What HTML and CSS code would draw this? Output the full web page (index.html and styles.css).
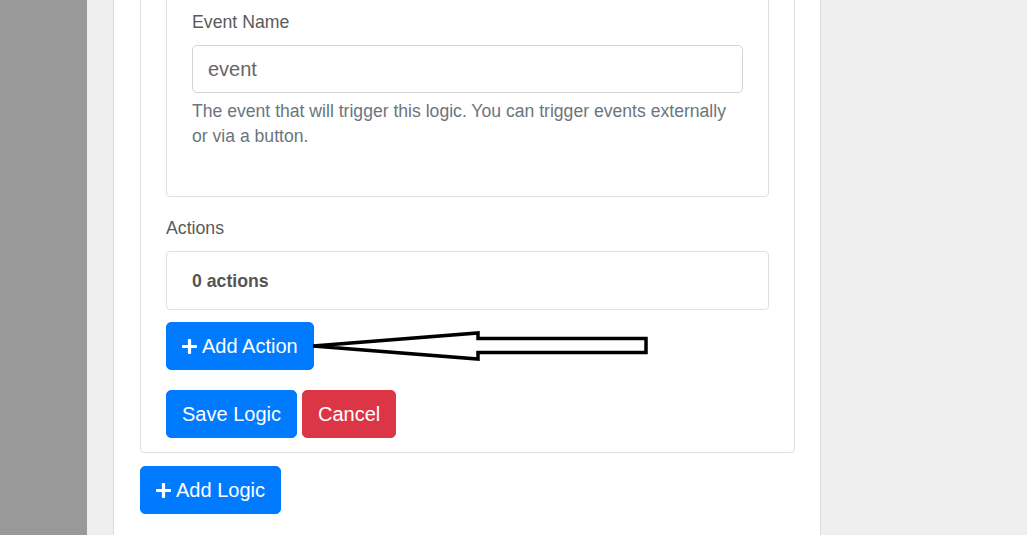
FILE: index.html
```html
<!DOCTYPE html>
<html lang="en">
<head>
<meta charset="utf-8">
<title>Logic editor</title>
<link rel="stylesheet" href="styles.css">
</head>
<body>
<div class="layout">
  <div class="sidebar"></div>
  <div class="gutter"></div>
  <main class="panel">
    <section class="card logic-card">
      <div class="card inner-card">
        <div class="form-group">
          <label class="label" for="event-name">Event Name</label>
          <input id="event-name" class="form-control" type="text" value="event">
          <p class="form-text">The event that will trigger this logic. You can trigger events externally or via a button.</p>
        </div>
      </div>
      <div class="label actions-label">Actions</div>
      <div class="card actions-box"><strong>0 actions</strong></div>
      <button class="btn btn-primary add-action" type="button">
        <svg class="plus" viewBox="0 32 448 448" aria-hidden="true"><path d="M416 208H272V64c0-17.67-14.33-32-32-32h-32c-17.67 0-32 14.33-32 32v144H32c-17.67 0-32 14.33-32 32v32c0 17.67 14.33 32 32 32h144v144c0 17.670 14.33 32 32 32h32c17.67 0 32-14.33 32-32V304h144c17.67 0 32-14.33 32-32v-32c0-17.67-14.33-32-32-32z"/></svg>
        Add Action
      </button>
      <div class="btn-row">
        <button class="btn btn-primary" type="button">Save Logic</button>
        <button class="btn btn-danger" type="button">Cancel</button>
      </div>
    </section>
    <button class="btn btn-primary add-logic" type="button">
      <svg class="plus" viewBox="0 32 448 448" aria-hidden="true"><path d="M416 208H272V64c0-17.67-14.33-32-32-32h-32c-17.67 0-32 14.33-32 32v144H32c-17.67 0-32 14.33-32 32v32c0 17.67 14.33 32 32 32h144v144c0 17.67 14.33 32 32 32h32c17.67 0 32-14.33 32-32V304h144c17.67 0 32-14.33 32-32v-32c0-17.67-14.33-32-32-32z"/></svg>
      Add Logic
    </button>
  </main>
  <div class="rest"></div>
</div>
<svg class="arrow" viewBox="0 0 1027 535" aria-hidden="true">
  <polygon points="313,346 478,333 478,338.5 646,338.5 646,352.5 478,352.5 478,359" />
</svg>
</body>
</html>
```

FILE: styles.css
```css
html, body {
  margin: 0;
  height: 100%;
  overflow: hidden;
}

body {
  font-family: "Liberation Sans", Arial, Helvetica, sans-serif;
  font-size: 16px;
  line-height: 1.5;
  color: #555;
  background: #efefef;
  position: relative;
}

.layout {
  display: flex;
  height: 535px;
}

.sidebar {
  width: 87px;
  flex: none;
  background: #999999;
}

.gutter {
  width: 26px;
  flex: none;
  background: #efefef;
}

.panel {
  flex: none;
  width: 708px;
  box-sizing: border-box;
  background: #fff;
  border-left: 1px solid #dcdcdc;
  border-right: 1px solid #dcdcdc;
  padding: 0 25px 0 26px;
}

.rest {
  flex: 1;
  background: #efefef;
}

.card {
  border: 1px solid #dfdfdf;
  border-radius: 4px;
  background: #fff;
  box-sizing: border-box;
}

.logic-card {
  margin-top: -42px;
  width: 655px;
  padding: 25px 25px 14px;
}

.inner-card {
  padding: 25px 25px 25px;
}

.form-group {
  margin-bottom: 22px;
}

.label {
  display: block;
  font-size: 17.7px;
  line-height: 24px;
  color: #5a5a5a;
  margin-bottom: 11px;
}

.form-control {
  display: block;
  width: 100%;
  height: 48px;
  box-sizing: border-box;
  padding: 0 15px;
  font-family: inherit;
  font-size: 20px;
  color: #666;
  border: 1px solid #ced4da;
  border-radius: 5px;
  background: #fff;
}

.form-text {
  margin: 6px 0 0;
  font-size: 17.6px;
  line-height: 25px;
  color: #6c757d;
}

.actions-label {
  margin-top: 19px;
}

.actions-box {
  padding: 16.5px 25px;
  line-height: 24px;
  font-size: 17.7px;
  color: #555;
}

.btn {
  display: inline-flex;
  align-items: center;
  height: 48px;
  box-sizing: border-box;
  padding: 0 15px;
  font-family: inherit;
  font-size: 20px;
  line-height: 30px;
  border: 1px solid transparent;
  border-radius: 5px;
  color: #fff;
  cursor: pointer;
}

.btn-primary {
  background: #007bff;
  border-color: #007bff;
}

.btn-danger {
  background: #dc3545;
  border-color: #dc3545;
}

.plus {
  width: 15px;
  height: 15px;
  fill: #fff;
  margin-right: 5px;
}

.add-action {
  margin-top: 12px;
}

.btn-row {
  display: flex;
  gap: 5px;
  margin-top: 20px;
}

.add-logic {
  margin-top: 13px;
}

.arrow {
  position: absolute;
  left: 0;
  top: 0;
  width: 1027px;
  height: 535px;
  pointer-events: none;
}

.arrow polygon {
  fill: #fff;
  stroke: #000;
  stroke-width: 3.5;
  stroke-linejoin: miter;
}
```
